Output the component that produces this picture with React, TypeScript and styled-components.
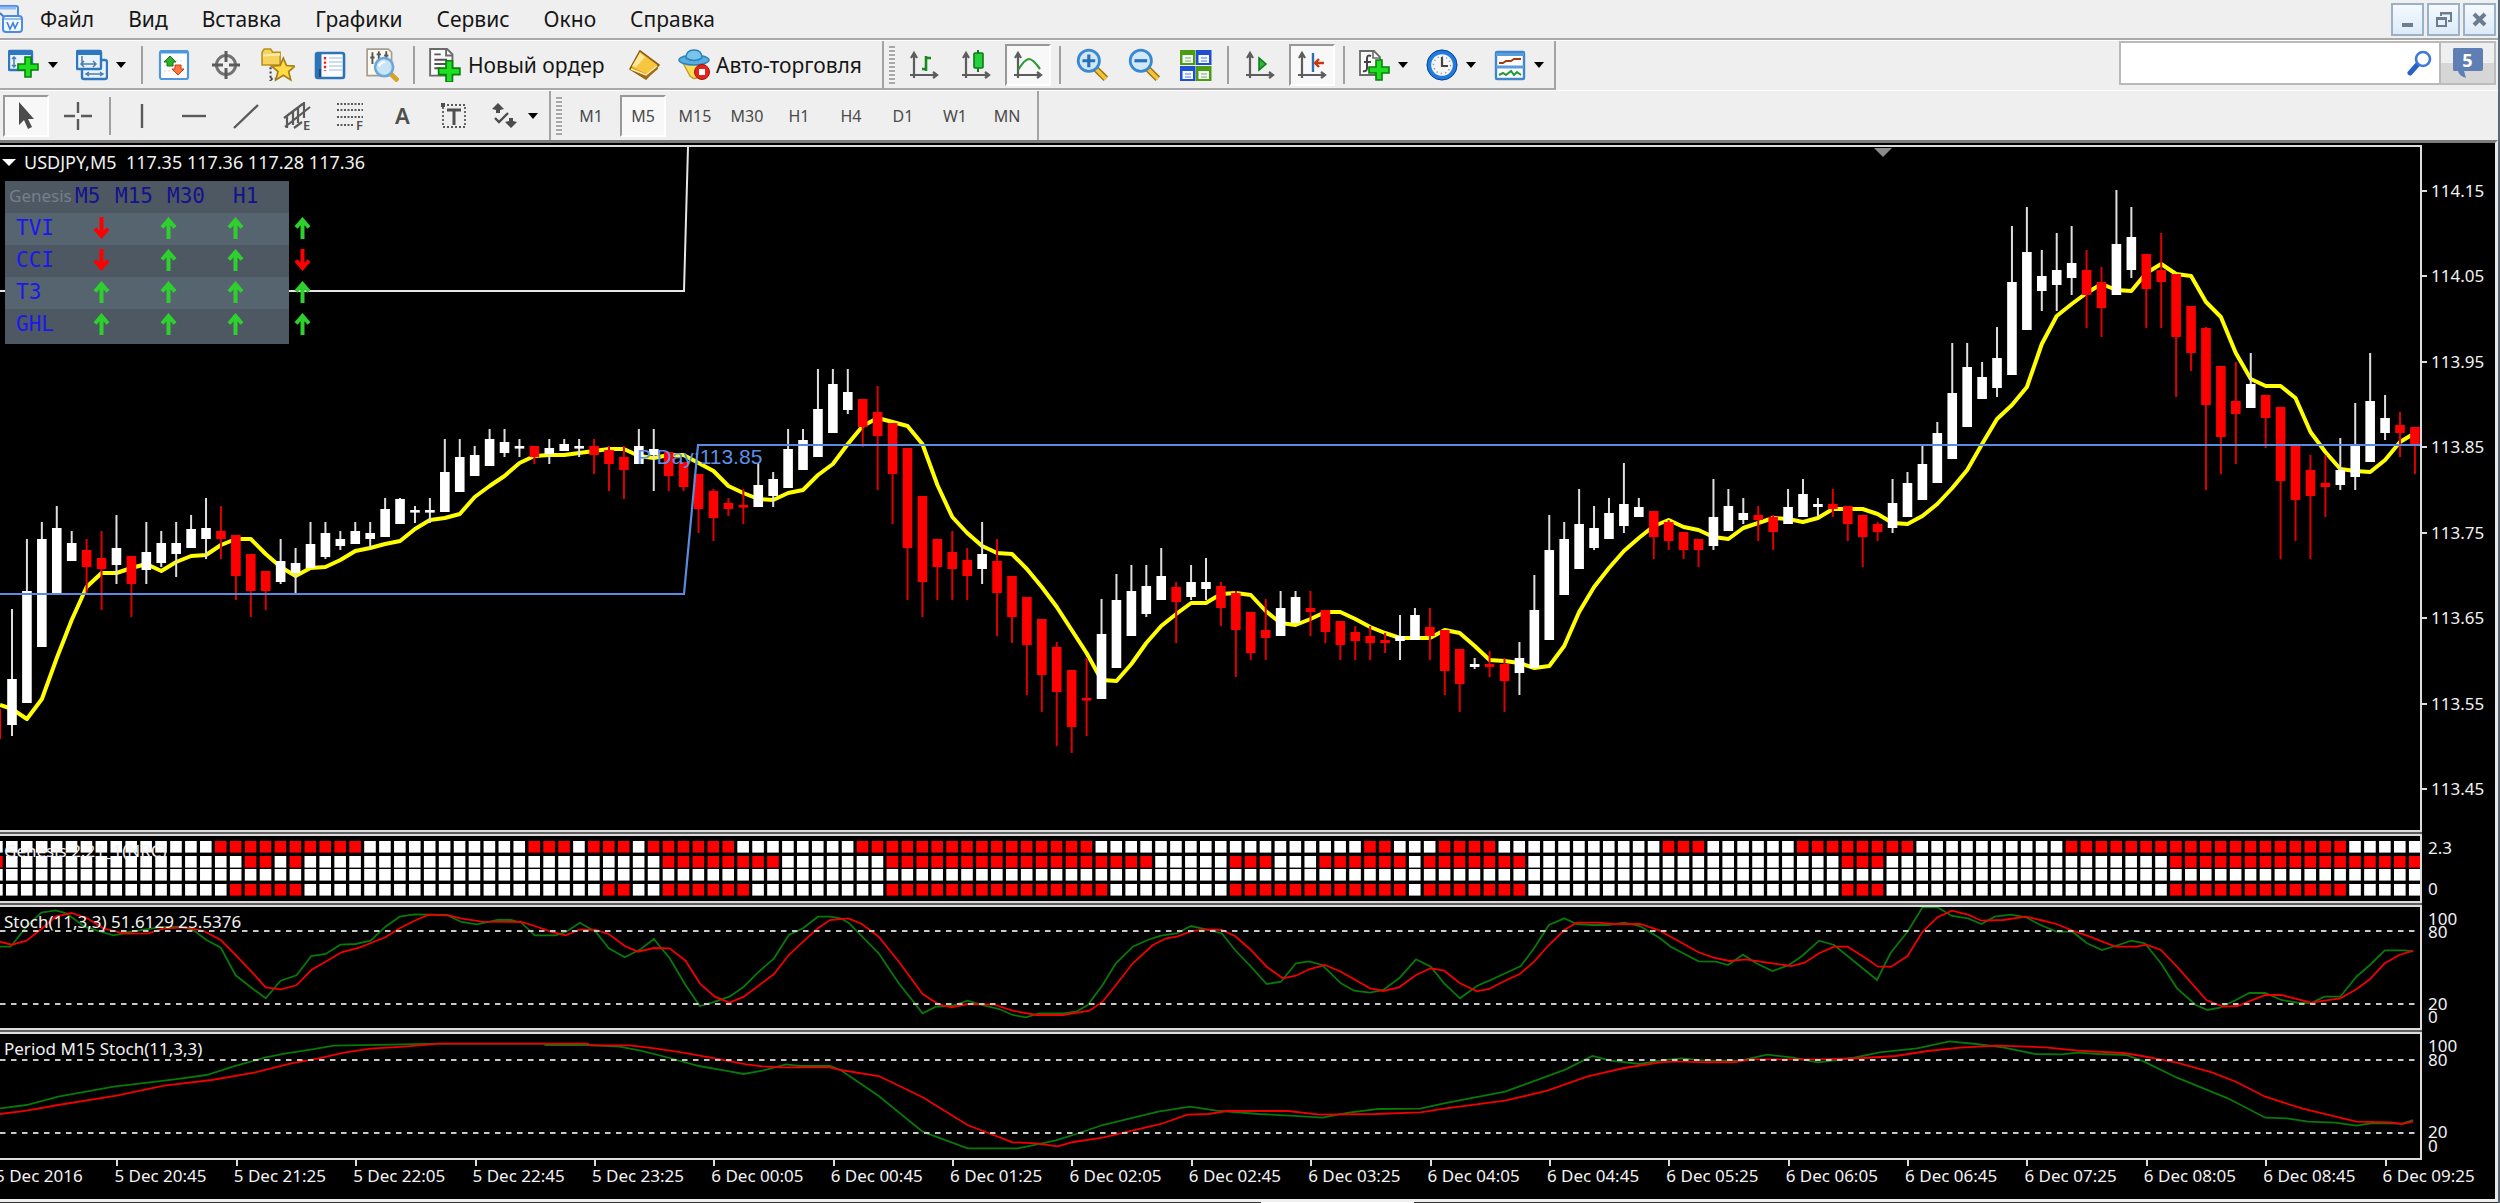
import React from "react";
import styled, { createGlobalStyle, css } from "styled-components";

const UI = `"Noto Sans", "Open Sans", "DejaVu Sans", sans-serif`;
const MONO = `"DejaVu Sans Mono", "Liberation Mono", monospace`;

const GlobalStyle = createGlobalStyle`
  * { box-sizing: border-box; }
  body { margin: 0; background: #efefef; font-family: ${UI}; }
  button, input { font: inherit; color: inherit; }
`;

/* ---------- window shell ---------- */

const Shell = styled.div`
  min-height: 100vh;
  display: flex;
  flex-direction: column;
  background: #efefef;
  border-right: 2px solid #59677c;
  overflow: hidden;
`;

const MenuRow = styled.header`
  display: flex;
  align-items: center;
  height: 40px;
  border-bottom: 2px solid #a9a9a9;
`;

const MenuNav = styled.nav`
  display: flex;
  flex: 1;
`;

const MenuButton = styled.button`
  border: 0;
  background: none;
  padding: 0 17px;
  font-size: 21px;
  line-height: 36px;
  color: #161616;
`;

const WindowButtons = styled.div`
  display: flex;
  gap: 3px;
  padding-right: 2px;
`;

const WindowButton = styled.button`
  width: 33px;
  height: 33px;
  padding: 0;
  display: grid;
  place-items: center;
  border: 2px solid #9db1c6;
  background: linear-gradient(#f4f9fd, #dcebf9);
`;

const ToolRow = styled.div`
  display: flex;
  align-items: stretch;
  height: 50px;
  border-top: 1px solid #ffffff;
`;

const ToolGroup = styled.div`
  display: flex;
  align-items: center;
  border-right: 2px solid #a4a4a4;
  border-bottom: 2px solid #a9a9a9;
`;

const SecondGroup = styled(ToolGroup)<{ $end?: number }>`
  border-bottom: 0;
  padding-right: ${(p) => p.$end ?? 0}px;
`;

const Grip = styled.span`
  width: 6px;
  height: 38px;
  margin: 0 3px 0 5px;
  background: repeating-linear-gradient(#a8a8a8 0 2px, #f4f4f4 2px 4px);
`;

const Divider = styled.span`
  width: 2px;
  height: 38px;
  margin: 0 5px;
  background: #a0a0a0;
`;

const ToolButton = styled.button<{ $on?: boolean }>`
  flex: none;
  width: 46px;
  height: 42px;
  margin: 0 3px;
  padding: 0;
  display: grid;
  place-items: center;
  border: 0;
  background: none;
  font-size: 16px;
  color: #4a4a4a;
  ${(p) =>
    p.$on &&
    css`
      background: #f8f8f8;
      border: 2px solid #ffffff;
      border-top-color: #989898;
      border-left-color: #989898;
    `}
`;

const DropButton = styled.button`
  flex: none;
  width: 68px;
  height: 42px;
  padding: 0 0 0 8px;
  display: flex;
  align-items: center;
  gap: 8px;
  border: 0;
  background: none;
  &::after {
    content: "";
    border: 5px solid transparent;
    border-top: 6px solid #000;
    border-bottom: 0;
  }
`;

const WideButton = styled.button<{ $w: number }>`
  flex: none;
  min-width: ${(p) => p.$w}px;
  height: 42px;
  padding: 0 8px;
  display: flex;
  align-items: center;
  gap: 6px;
  border: 0;
  background: none;
  font-size: 21px;
  white-space: nowrap;
  color: #161616;
`;

const Spacer = styled.div`
  flex: 1;
`;

const SearchBox = styled.label`
  flex: none;
  display: flex;
  align-items: center;
  width: 322px;
  height: 44px;
  padding-right: 6px;
  background: #fff;
  border: 2px solid #b9b9b9;
`;

const SearchInput = styled.input`
  flex: 1;
  min-width: 0;
  border: 0;
  outline: 0;
  background: none;
  padding: 0 8px;
  font-size: 21px;
`;

const NewsButton = styled.button`
  flex: none;
  width: 55px;
  height: 44px;
  margin-right: 2px;
  padding: 0;
  display: grid;
  place-items: center;
  border: 2px solid #bcbcbc;
  border-left: 0;
  background: linear-gradient(#efefef 50%, #d6d6d6 50%);
`;

const Stack = styled.span`
  display: grid;
  place-items: center;
  & > * {
    grid-area: 1 / 1;
  }
`;

const NewsCount = styled.span`
  font-size: 18px;
  font-weight: 700;
  line-height: 20px;
  padding-bottom: 6px;
  color: #fff;
`;

/* ---------- chart window ---------- */

const ChartWindow = styled.main`
  flex: 1;
  display: flex;
  flex-direction: column;
  padding-top: 2px;
  background: #000;
  border-top: 3px solid #7c7c7c;
  border-right: 3px solid #e9e9e9;
  border-bottom: 3px solid #efefef;
  font-size: 17px;
  color: #f2f2f2;
  overflow: hidden;
`;

const Pane = styled.section<{ $h: number; $grow?: boolean }>`
  display: grid;
  grid-template-columns: minmax(0, 1fr) 73px;
  flex: ${(p) => (p.$grow ? 1 : 0)} 0 ${(p) => p.$h}px;
`;

const Plot = styled.div`
  display: grid;
  grid-template: minmax(0, 1fr) / minmax(0, 1fr);
  border-top: 2px solid #dcdcdc;
  border-bottom: 2px solid #dcdcdc;
  border-right: 2px solid #dcdcdc;
  min-height: 0;
  & > * {
    grid-area: 1 / 1;
  }
`;

const Splitter = styled.div`
  flex: none;
  height: 2px;
  margin-right: 73px;
  background: #5f5f5f;
`;

const Canvas = styled.svg`
  display: block;
  width: 100%;
  height: 100%;
  min-height: 0;
`;

const PlotTitle = styled.div`
  z-index: 1;
  align-self: start;
  justify-self: start;
  padding-left: 4px;
  line-height: 30px;
  white-space: pre;
`;

const SymbolTitle = styled(PlotTitle)`
  display: flex;
  align-items: center;
  gap: 8px;
  padding-left: 2px;
  font-size: 18px;
  &::before {
    content: "";
    border: 7px solid transparent;
    border-top: 7px solid #fff;
    border-bottom: 0;
  }
`;

const PriceAxis = styled.div`
  display: flex;
  flex-direction: column;
  justify-content: space-between;
  padding: 34px 0 31px;
  line-height: 24px;
`;

const PriceLabel = styled.span`
  display: flex;
  align-items: center;
  gap: 4px;
  &::before {
    content: "";
    width: 5px;
    height: 2px;
    background: #dcdcdc;
  }
`;

const LevelAxis = styled.div<{ $line: number }>`
  display: flex;
  flex-direction: column;
  justify-content: space-between;
  padding: 7px 0 7px 6px;
  line-height: ${(p) => p.$line}px;
`;

const LevelGroup = styled.div`
  display: flex;
  flex-direction: column;
`;

const TimeAxis = styled.div`
  flex: none;
  display: grid;
  grid-template-columns: repeat(21, minmax(0, 1fr));
  height: 39px;
  margin: 0 -7px 0 -5px;
`;

const TimeLabel = styled.span`
  white-space: nowrap;
  line-height: 20px;
  &::before {
    content: "";
    display: block;
    width: 2px;
    height: 6px;
    margin-left: 2px;
    background: #dcdcdc;
  }
`;

const StatusStrip = styled.div`
  flex: none;
  height: 2px;
  background: linear-gradient(90deg, #333 1261px, #fff 1261px 1414px, #333 1414px);
`;

/* ---------- signal table ---------- */

const SignalTable = styled.table`
  z-index: 1;
  display: block;
  align-self: start;
  justify-self: start;
  margin: 34px 0 0 5px;
  font-family: ${MONO};
  font-size: 21px;
  line-height: 30px;
  text-align: left;
  white-space: nowrap;
  & th {
    font-weight: 400;
    padding: 0;
  }
  & td {
    padding: 0;
  }
  & thead, & tbody {
    display: block;
  }
`;

const SignalHead = styled.tr`
  display: grid;
  grid-template-columns: 70px 40px 52px 66px 56px;
  width: 284px;
  height: 32px;
  background: #4d5862;
  color: #14128e;
`;

const PanelName = styled.th`
  font-family: ${UI};
  font-size: 17px;
  color: #74808b;
  && {
    padding-left: 4px;
  }
`;

const SignalRow = styled.tr<{ $alt?: boolean }>`
  display: grid;
  grid-template-columns: 63px repeat(4, 67px);
  width: 284px;
  height: 32px;
  background: ${(p) => (p.$alt ? "#4d5862" : "#56646f")};
  &:last-child {
    height: 35px;
  }
`;

const SignalName = styled.th`
  color: #1a18ec;
  && {
    padding-left: 11px;
  }
`;

const SignalCell = styled.td`
  display: flex;
  height: 30px;
  align-items: center;
  justify-content: center;
`;

/* ---------- icons ---------- */

type IconProps = { children: React.ReactNode; size?: number };
const Icon = ({ children, size = 32 }: IconProps) => (
  <svg width={size} height={size} viewBox="0 0 32 32" fill="none" aria-hidden="true">
    {children}
  </svg>
);

const Plus = ({ x, y }: { x: number; y: number }) => (
  <path
    transform={`translate(${x} ${y})`}
    d="M7 0h6v7h7v6h-7v7H7v-7H0V7h7z"
    fill="#1fe01f"
    stroke="#08800d"
    strokeWidth="1.6"
  />
);

const Axes = () => (
  <path d="M6 29V6M2 26h26M3 9l3-5 3 5M25 23l4 3-4 3" stroke="#5c5c5c" strokeWidth="2.2" />
);

const AppIcon = () => (
  <svg width="23" height="28" viewBox="0 0 23 28" fill="none" aria-hidden="true">
    <path d="M-4 1h20q2 0 2 2v8" stroke="#4b8be6" strokeWidth="2" />
    <path d="M-2 3h18" stroke="#8fbcf5" strokeWidth="3" />
    <path d="M0 8l4 4" stroke="#3d7ee0" strokeWidth="2" />
    <rect x="3" y="11" width="19" height="16" rx="3" fill="#f4f9ff" stroke="#4b8be6" strokeWidth="2" />
    <path d="M4 14h17" stroke="#8fbcf5" strokeWidth="2" />
    <path d="M7 17l3 7 3-6 2 5 3-6" stroke="#3d7ee0" strokeWidth="1.6" />
  </svg>
);

const NewChart = () => (
  <Icon>
    <rect x="1" y="2" width="23" height="19" rx="1" fill="#e9f3fc" stroke="#2f78bf" strokeWidth="2.4" />
    <path d="M1 4h23" stroke="#2f78bf" strokeWidth="4" />
    <path d="M6 8v10M4 10l2-2 2 2M4 16l2 2 2-2M10 16h4" stroke="#4d7eaa" strokeWidth="1.5" />
    <Plus x={10} y={8} />
  </Icon>
);

const Profiles = () => (
  <Icon>
    <rect x="6" y="11" width="25" height="19" rx="2" fill="#e9f3fc" stroke="#2f78bf" strokeWidth="2.4" />
    <path d="M10 25h17M13 23l-3 2 3 2M24 23l3 2-3 2" stroke="#4d7eaa" strokeWidth="1.5" />
    <rect x="1" y="2" width="24" height="18" rx="1" fill="#e9f3fc" stroke="#2f78bf" strokeWidth="2.4" />
    <path d="M1 4h24" stroke="#2f78bf" strokeWidth="4" />
    <path d="M6 7v9M5 15h15M17 12l3 3-3 3M8 12l-3 3 3 3" stroke="#4d7eaa" strokeWidth="1.5" />
  </Icon>
);

const MarketWatch = () => (
  <Icon>
    <rect x="2" y="2" width="28" height="28" rx="2" fill="#fff" stroke="#4f97dd" strokeWidth="2.2" />
    <path d="M2 3h28" stroke="#4f97dd" strokeWidth="3" />
    <path d="M6 12h20M6 17h20M6 22h20" stroke="#d9d9d9" strokeWidth="1" strokeDasharray="2 2" />
    <path d="M12 7l6 6h-3v4H9v-4H6z" fill="#2fae2b" stroke="#117a14" />
    <path d="M20 26l-6-6h3v-4h6v4h3z" fill="#ff7541" stroke="#c93d13" />
  </Icon>
);

const Crosshair = () => (
  <Icon>
    <circle cx="16" cy="16" r="9.5" stroke="#727272" strokeWidth="3" />
    <path d="M16 2v11M16 19v11M2 16h11M19 16h11" stroke="#5c5c5c" strokeWidth="3" />
  </Icon>
);

const star = "M0-10l3 7 8 .6-6 5 2 8-7-4.400-7 4.400 2-8-6-5 8-.6z";

const Navigator = () => (
  <Icon size={34}>
    <path d="M1 4l2-3h6l2 3h7v12H1z" fill="#f6d35c" stroke="#b8901d" strokeWidth="1.5" />
    <path d="M2 7l16-1" stroke="#fff0a8" strokeWidth="2" />
    <path d="M9 18v13M9 29h8" stroke="#444" strokeWidth="2" strokeDasharray="2 2" />
    <path d={star} transform="translate(21 19.500)" fill="#ffdb45" stroke="#a77f17" strokeWidth="1.6" />
  </Icon>
);

const DataWindow = () => (
  <Icon>
    <rect x="2" y="4" width="28" height="25" rx="2" fill="#fff" stroke="#2c73b8" strokeWidth="2.6" />
    <path d="M5 4v25" stroke="#2c73b8" strokeWidth="5" />
    <path d="M6 20v8" stroke="#20476e" strokeWidth="2" />
    <path d="M15 9h13M15 13h13M15 17h13M15 21h13" stroke="#b9d3ee" strokeWidth="1.5" />
    <path d="M11 8v14" stroke="#e22" strokeWidth="2.4" strokeDasharray="2.400 2" />
  </Icon>
);

const Tester = () => (
  <Icon size={34}>
    <path d="M2 1h20l3 3v22H2z" fill="#fbf8f0" stroke="#a59d8f" strokeWidth="1.6" />
    <path d="M7 4v11M5 9h4M13 3v8M11 6h4M20 3v9M18 7h4" stroke="#555" strokeWidth="1.8" />
    <path d="M24 24l7 7" stroke="#d9a326" strokeWidth="4.500" />
    <circle cx="18" cy="18" r="8.500" fill="#bfe0f8" fillOpacity=".85" stroke="#6ca7dc" strokeWidth="2.4" />
    <path d="M13 17q2-4 6-4" stroke="#fff" strokeWidth="2" />
  </Icon>
);

const NewOrder = () => (
  <Icon size={34}>
    <path d="M2 1h16l5 5v20H2z" fill="#fafafa" stroke="#6b6b6b" strokeWidth="1.8" />
    <path d="M17 1v6h6" stroke="#6b6b6b" strokeWidth="1.8" />
    <path d="M6 6h6M6 11h12M6 15h12M6 19h6" stroke="#555" strokeWidth="1.8" />
    <Plus x={10} y={12} />
  </Icon>
);

const MetaEditor = () => (
  <Icon>
    <path d="M12 2L31 16l-13 14L2 20z" fill="#d99a18" stroke="#8a5c0c" strokeWidth="1.6" />
    <path d="M12 3l17 13-10 9L4 18z" fill="#f6c63f" />
    <path d="M12 4l5 4-9 10-4-1z" fill="#fde79a" />
    <path d="M2 20l16 6 12-10v4L18 30z" fill="#a56a10" />
    <path d="M3 20l15 6 11-9" stroke="#fff1b5" strokeWidth="1.400" />
  </Icon>
);

const AutoTrading = () => (
  <Icon>
    <path d="M4 12h24l-7 15q-4 5-9 0z" fill="#fbdc55" stroke="#c49b25" strokeWidth="1.4" />
    <ellipse cx="16" cy="11" rx="15" ry="5" fill="#58aee0" stroke="#2b82ba" strokeWidth="1.5" />
    <path d="M8 9q0-8 8-8t8 8q-8 5-16 0z" fill="#79c4ec" stroke="#2b82ba" strokeWidth="1.5" />
    <circle cx="24" cy="23" r="7.500" fill="#e3261b" stroke="#a4120b" />
    <rect x="21" y="20" width="6" height="6" fill="#fff" />
  </Icon>
);

const BarChartIcon = () => (
  <Icon>
    <Axes />
    <path d="M18 7v15M18 9h5M14 20h4" stroke="#178a20" strokeWidth="2.600" />
  </Icon>
);

const CandleIcon = () => (
  <Icon>
    <Axes />
    <path d="M18 1v22" stroke="#0d7a18" strokeWidth="2" />
    <rect x="14" y="4" width="9" height="15" rx="1" fill="#27cf3c" stroke="#0d7a18" strokeWidth="1.600" />
  </Icon>
);

const LineIcon = () => (
  <Icon>
    <Axes />
    <path d="M6 21q7-11 11-11t11 10" stroke="#2a9a34" strokeWidth="2.200" />
  </Icon>
);

const Zoom = ({ plus }: { plus?: boolean }) => (
  <Icon size={34}>
    <path d="M20 20l9 9" stroke="#9a6c0d" strokeWidth="6" />
    <path d="M20 20l9 9" stroke="#f2c437" strokeWidth="3.600" />
    <circle cx="13" cy="12" r="10" fill="#cfe9fb" stroke="#3a89d0" strokeWidth="2.600" />
    <path d={plus ? "M7 12h12M13 6v12" : "M7 12h12"} stroke="#2d70b2" strokeWidth="3" />
  </Icon>
);

const Tile = () => (
  <Icon>
    {[
      [0, 1, "#4a9c12"],
      [16, 1, "#1f4fd0"],
      [0, 17, "#1f4fd0"],
      [16, 17, "#4a9c12"],
    ].map(([x, y, c]) => (
      <g key={`${x}-${y}`} transform={`translate(${x} ${y})`}>
        <rect width="15.500" height="15" fill={String(c)} />
        <rect x="2.500" y="5" width="10.500" height="8" fill="#f4f8ff" />
        <path d="M5 8h6M5 11h6" stroke={String(c)} strokeOpacity=".5" strokeWidth="1.4" />
      </g>
    ))}
  </Icon>
);

const AutoScroll = () => (
  <Icon>
    <Axes />
    <path d="M15 9v12l7-6z" fill="#27b83a" stroke="#0d7a18" strokeWidth="1.500" />
  </Icon>
);

const ShiftIcon = () => (
  <Icon>
    <Axes />
    <path d="M17 4v19" stroke="#2d70b2" strokeWidth="2.400" />
    <path d="M19 14h9M23 10l-4 4 4 4" stroke="#c8380f" strokeWidth="2.400" />
  </Icon>
);

const Indicators = () => (
  <Icon>
    <path d="M2 2h14l6 6v18H2z" fill="#fafafa" stroke="#6b6b6b" strokeWidth="1.8" />
    <path d="M15 2v7h7" stroke="#6b6b6b" strokeWidth="1.6" />
    <path d="M13 7q-4-2-4 3v9q0 4-4 3M6 13h7" stroke="#444" strokeWidth="2" />
    <Plus x={11} y={11} />
  </Icon>
);

const Clock = () => (
  <Icon>
    <circle cx="16" cy="16" r="13" fill="#f6f6f6" stroke="#1f7be0" strokeWidth="4.400" />
    <circle cx="16" cy="16" r="15" stroke="#0c458f" strokeWidth="1" />
    <path d="M16 8v9h6" stroke="#444" strokeWidth="2.200" />
    <circle cx="16" cy="16" r="8.500" stroke="#9a9a9a" strokeWidth="1.400" strokeDasharray="1.400 3" />
  </Icon>
);

const Template = () => (
  <Icon>
    <rect x="2" y="3" width="28" height="27" rx="1" fill="#fff" stroke="#3f86cb" strokeWidth="2.400" />
    <path d="M2 5.500h28M2 18h28" stroke="#5b9ddb" strokeWidth="3" />
    <path d="M5 14h4l3-2h5l3-2h7" stroke="#a33b12" strokeWidth="2" />
    <path d="M5 26l4-2 3 2 5-4 3 4 3-3 4 3" stroke="#239a37" strokeWidth="2" />
  </Icon>
);

const Draw = ({ d }: { d: string }) => (
  <Icon>
    <path d={d} stroke="#5a5a5a" strokeWidth="2.400" />
  </Icon>
);

const Pointer = () => (
  <Icon>
    <path d="M9 2v23l5-5 4 9 4-2-4-8h6z" fill="#4c4c4c" />
  </Icon>
);

const glyph = { fontFamily: UI, fontWeight: 600, fill: "#4f4f4f" };

const Channel = () => (
  <Icon>
    <path d="M2 18L22 3M3 27L28 7M5 15v13M11 11v14M16 7v16M22 2v16M12 28l8-6" stroke="#5a5a5a" strokeWidth="2.200" />
    <text x="21" y="30" fontSize="13" {...glyph}>E</text>
  </Icon>
);

const Fibo = () => (
  <Icon>
    <path d="M3 4h26M3 10h26M3 17h26M3 25h16" stroke="#5a5a5a" strokeWidth="2" strokeDasharray="2 1.500" />
    <text x="22" y="30" fontSize="13" {...glyph}>F</text>
  </Icon>
);

const LetterA = () => (
  <Icon>
    <text x="9" y="24" fontSize="22" {...glyph}>A</text>
  </Icon>
);

const TextLabel = () => (
  <Icon>
    <rect x="5" y="5" width="22" height="22" stroke="#5a5a5a" strokeWidth="1.800" strokeDasharray="2 2" />
    <path d="M3 3h4v4H3z" fill="#4f4f4f" />
    <path d="M9 10h14M16 10v15" stroke="#4f4f4f" strokeWidth="3" />
  </Icon>
);

const Shapes = () => (
  <Icon>
    <path d="M10 3l6 6-4 1v3H8v-3l-4-1zM23 28l6-6-4-1v-3h-4v3l-4 1z" fill="#4c4c4c" />
    <path d="M7 18l4 4 9-9" stroke="#4c4c4c" strokeWidth="2.400" />
  </Icon>
);

const Arrow = ({ up }: { up: boolean }) => (
  <svg width="17" height="22" viewBox="0 0 17 22" fill="none" role="img" aria-label={up ? "up" : "down"}>
    <path
      d={up ? "M8.500 22V2M2 10.500L8.500 3 15 10.500" : "M8.500 0v20M2 11.500L8.500 19 15 11.500"}
      stroke={up ? "#2ed02e" : "#ff0000"}
      strokeWidth="4"
    />
  </svg>
);

/* ---------- chart data ---------- */

const STEP = 14.925;
const barX = (i: number) => 12 + i * STEP;

// Each bar: direction, high, body top, body bottom, low.
const BARS = `
w609,679,725,736 w539,591,703,703 w522,539,647,647 w506,528,593,593 w531,543,561,561 r539,550,567,593
r531,558,569,610 w515,548,565,584 r556,556,584,617 w522,552,570,584 w531,543,563,567 w522,543,554,577
w515,529,548,548 w498,528,539,559 r506,531,539,559 r535,535,576,600 r554,554,591,617 r571,571,591,610
w539,561,582,584 w548,563,573,593 w522,544,568,568 w522,533,557,559 w531,539,546,550 w522,531,544,544
w522,533,539,548 w498,509,537,537 w498,499,524,524 w506,510,512,523 w498,510,512,523 w439,472,512,512
w439,457,492,492 w446,455,476,476 w429,439,466,466 w429,442,453,457 w439,446,448,457 r446,446,457,464
w439,448,454,464 w439,444,451,451 w439,446,448,457 r439,446,455,474 r446,450,464,491 r446,457,470,499
w429,446,464,464 w429,449,455,491 r452,452,476,491 r462,462,487,491 r474,474,509,533 r489,491,518,541
r498,503,509,516 r489,505,507,524 w463,485,507,507 w472,479,496,507 w429,449,488,488 w429,440,470,470
w369,409,457,457 w369,384,433,433 w369,392,410,414 r399,399,427,447 r386,412,436,490 r423,423,474,524
r448,448,548,600 r496,496,582,617 r539,539,567,600 r531,552,569,600 r548,560,576,600 w522,554,569,584
r539,561,593,636 r576,576,617,643 r597,597,645,695 r619,619,675,712 r642,647,692,746 r670,670,727,753
r658,698,700,736 w599,634,699,699 w574,600,668,668 w565,591,636,636 w565,586,614,617 w548,576,600,600
r582,587,602,643 w565,582,597,600 w558,582,589,600 r582,586,608,626 r591,593,630,677 r612,612,653,660
r599,630,638,660 w591,608,636,636 w591,597,623,623 r591,608,612,636 r610,610,632,643 r621,621,645,660
r626,632,641,660 r626,636,643,660 r633,640,643,653 w615,636,641,660 w608,615,640,640 r608,627,636,660
r630,630,671,695 r649,649,684,712 w658,664,667,669 r651,664,667,677 r658,664,681,712 w642,658,673,695
w575,610,668,668 w515,550,640,640 w522,539,595,595 w489,524,569,569 w506,528,548,550 w498,513,539,539
w463,504,526,533 w498,507,517,517 r511,511,537,559 r520,522,541,550 r532,532,550,559 r539,539,550,567
w479,517,546,550 w489,506,531,531 w498,513,520,524 r506,515,520,541 r515,517,532,550 w489,507,524,524
w479,494,517,517 w498,504,507,517 r489,504,509,517 r506,506,524,541 r515,515,537,567 r522,524,532,541
w479,503,528,533 w472,483,517,517 w445,464,500,500 w422,433,483,483 w343,393,459,459 w343,367,427,427
w362,377,399,399 w327,358,388,397 w226,282,375,375 w207,252,330,330 w250,276,291,311 w233,270,285,311
w226,263,278,295 r250,270,295,328 r267,282,308,337 w190,244,295,295 w207,237,270,278 r254,254,289,328
r233,270,282,328 r274,274,337,397 r306,306,353,371 r327,328,405,490 r366,366,437,474 r362,401,414,464
w353,384,408,408 r395,395,418,448 r407,407,481,559 r446,446,500,541 r455,470,496,559 r455,483,487,517
w438,470,485,490 w403,446,477,490 w353,401,462,462 w395,418,433,440 r412,425,433,457 r427,427,444,474`
  .trim()
  .split(/\s+/)
  .map((s) => ({ up: s[0] === "w", v: s.slice(1).split(",").map(Number) }));

const AVERAGE = [
  709, 719, 699, 658, 620, 587, 573, 573, 568, 564, 571, 562, 556, 555, 545, 539, 539, 554, 567, 576, 568, 567,
  560, 551, 548, 544, 541, 529, 520, 518, 514, 497, 486, 476, 463, 456, 455, 455, 453, 451, 449, 449, 456, 458,
  455, 455, 463, 471, 486, 493, 499, 500, 493, 490, 475, 464, 444, 426, 418, 422, 426, 444, 485, 517, 533, 546,
  553, 554, 569, 587, 607, 630, 653, 680, 681, 664, 643, 626, 614, 603, 603, 594, 593, 595, 611, 623, 625, 619,
  612, 612, 619, 627, 633, 638, 638, 638, 630, 633, 646, 660, 661, 663, 668, 666, 646, 612, 587, 568, 551, 538,
  526, 520, 527, 530, 537, 539, 528, 523, 518, 519, 522, 518, 509, 509, 509, 514, 523, 524, 516, 504, 488, 470,
  444, 419, 405, 387, 344, 316, 304, 293, 284, 290, 291, 273, 264, 274, 276, 302, 317, 353, 379, 386, 386, 398,
  432, 452, 469, 471, 472, 460, 442, 433,
];

// Heat-map rows: vertical position and the ranges of red cells.
const HEAT: { y: number; red: [number, number][] }[] = [
  { y: 841, red: [[14, 23], [35, 37], [39, 41], [43, 48], [57, 72], [91, 92], [96, 99], [111, 113], [120, 127], [138, 156]] },
  { y: 856, red: [[-1, -1], [16, 17], [19, 19], [44, 51], [59, 76], [82, 84], [88, 93], [95, 101], [123, 125], [145, 161]] },
  { y: 869, red: [] },
  { y: 884, red: [[15, 19], [40, 41], [44, 49], [59, 73], [82, 93], [95, 101], [123, 125], [145, 156]] },
];

// Oscillator traces come in three blocks, each with its own origin and x scale.
const BLOCKS = [
  [0, 1.889],
  [830, 1.889],
  [1660, 1.8667],
];

const trace = (...blocks: string[]) =>
  blocks
    .map((b, i) =>
      b
        .split(" ")
        .map((p) => {
          const [x, y] = p.split(",").map(Number);
          return `${(BLOCKS[i][0] + x / BLOCKS[i][1]).toFixed(1)},${(820 + y / 3).toFixed(1)}`;
        })
        .join(" ")
    )
    .join(" ");

const FAST_K = trace(
  "0,380 20,380 50,320 78,278 105,271 125,280 160,320 190,335 215,346 245,336 300,322 340,320 365,330 390,360 417,383 445,466 475,503 502,535 530,482 560,466 588,408 615,402 643,374 672,372 700,362 728,320 755,290 783,283 845,285 870,305 900,313 940,300 965,300 985,308 1010,346 1050,346 1070,335 1095,308 1125,335 1150,385 1180,412 1210,388 1235,357 1265,415 1295,495 1322,558 1345,548 1378,530 1405,500 1430,460 1462,415 1490,345 1517,325 1545,290",
  "0,290 20,295 35,308 92,400 130,490 175,580 200,560 230,558 260,542 290,556 320,567 345,585 370,592 395,580 440,580 465,575 487,555 515,495 540,430 572,380 600,360 625,347 655,340 682,318 710,328 740,340 765,390 795,440 825,492 852,485 880,430 905,424 930,435 965,490 990,512 1020,518 1045,510 1075,475 1107,418 1135,440 1160,490 1190,535 1222,498 1245,482 1305,438 1330,385 1358,315 1387,295 1410,312 1440,315 1470,315 1500,308 1530,318",
  "0,355 20,380 72,424 105,425 127,435 155,404 180,430 210,453 240,436 265,408 297,362 325,375 405,480 430,400 462,335 490,262 518,262 545,288 575,295 600,312 625,290 655,284 683,292 710,315 740,335 770,335 797,370 825,390 850,378 880,362 905,370 935,430 965,505 1000,555 1022,570 1045,563 1075,540 1100,519 1130,519 1160,540 1190,548 1215,550 1240,530 1270,530 1300,470 1325,435 1353,391 1390,391 1406,395"
);
const FAST_D = trace(
  "0,365 22,374 50,362 80,325 105,290 135,279 165,295 195,325 235,341 280,340 310,325 350,322 385,333 417,360 445,405 475,455 502,502 530,508 560,496 588,450 615,425 645,397 680,382 728,352 755,325 783,302 810,284 850,287 870,295 910,305 985,306 1010,318 1040,335 1068,346 1095,329 1125,330 1150,342 1180,378 1205,395 1235,384 1265,385 1295,422 1322,490 1350,530 1378,548 1405,530 1462,462 1490,405 1517,365 1545,325",
  "0,300 35,295 60,312 92,350 130,425 175,522 205,553 230,562 260,552 310,554 345,572 390,585 440,585 490,572 515,545 545,485 572,430 610,375 635,355 655,350 682,334 710,328 740,330 765,348 795,390 825,440 855,475 880,467 905,448 935,435 965,455 990,478 1020,505 1045,513 1075,502 1107,465 1135,445 1160,452 1190,490 1222,514 1245,507 1275,482 1303,462 1330,425 1358,375 1387,330 1410,308 1450,308 1480,312 1530,312",
  "0,332 20,350 72,397 100,413 130,423 160,418 210,430 245,438 270,428 297,400 325,380 350,380 380,410 407,440 432,440 462,408 490,335 518,292 545,272 575,284 600,302 640,300 683,290 710,300 740,312 770,332 797,347 850,380 890,380 908,374 935,390 965,440 1020,540 1050,560 1078,558 1130,525 1160,525 1215,548 1270,535 1300,508 1325,478 1353,430 1380,405 1406,392"
);
const SLOW_K = trace(
  "0,865 50,855 110,830 215,800 330,778 390,765 440,740 500,713 540,700 590,688 630,677 740,674 825,671 1030,671 1030,675 1110,675 1170,680 1210,692 1265,714 1320,738 1370,752 1405,762 1440,752 1485,733 1510,738",
  "0,738 20,750 92,828 175,935 260,985 355,985 425,962 465,942 515,915 620,875 680,860 730,872 810,882 870,887 930,893 980,878 1035,867 1115,866 1160,850 1275,815 1390,748 1440,708 1475,722 1530,732",
  "0,722 40,715 85,722 150,722 200,704 245,712 295,727 360,714 410,697 480,685 540,664 590,672 640,682 700,702 750,703 780,698 820,702 870,705 900,722 965,773 1060,835 1130,893 1170,895 1210,905 1260,908 1300,917 1330,909 1385,911 1406,900"
);
const SLOW_D = trace(
  "0,882 50,872 110,855 220,827 310,797 400,780 480,758 550,730 600,716 650,698 700,686 770,679 830,671 1110,671 1115,676 1190,676 1240,686 1290,698 1350,715 1410,733 1440,739 1480,742",
  "0,742 20,750 92,768 175,832 260,915 345,967 390,970 430,979 460,966 515,953 625,912 675,884 715,882 750,873 865,873 925,884 1030,882 1115,877 1160,866 1275,842 1355,812 1430,770 1500,744",
  "0,727 30,724 90,727 140,726 170,718 300,718 380,714 440,708 500,693 560,683 630,677 720,682 780,692 865,699 900,708 965,728 1030,757 1075,785 1130,830 1200,866 1300,905 1365,907 1385,912 1406,904"
);

const PRICES = ["114.15", "114.05", "113.95", "113.85", "113.75", "113.65", "113.55", "113.45"];

const TIMES = [
  "5 Dec 2016", "5 Dec 20:45", "5 Dec 21:25", "5 Dec 22:05", "5 Dec 22:45", "5 Dec 23:25", "6 Dec 00:05",
  "6 Dec 00:45", "6 Dec 01:25", "6 Dec 02:05", "6 Dec 02:45", "6 Dec 03:25", "6 Dec 04:05", "6 Dec 04:45",
  "6 Dec 05:25", "6 Dec 06:05", "6 Dec 06:45", "6 Dec 07:25", "6 Dec 08:05", "6 Dec 08:45", "6 Dec 09:25",
];

const SIGNALS: [string, boolean[]][] = [
  ["TVI", [false, true, true, true]],
  ["CCI", [false, true, true, false]],
  ["T3", [true, true, true, true]],
  ["GHL", [true, true, true, true]],
];

/* ---------- plots ---------- */

const PriceCanvas = () => (
  <Canvas viewBox="0 147 2420 683" preserveAspectRatio="none">
    <polyline points="0,291 684,291 688,147" fill="none" stroke="#e6e6e6" strokeWidth="2" />
    <polyline
      points={"0,705 " + AVERAGE.map((y, i) => `${barX(i).toFixed(1)},${y}`).join(" ")}
      fill="none"
      stroke="#ffff00"
      strokeWidth="4"
      strokeLinejoin="round"
    />
    <rect x="-8" y="709" width="9" height="30" fill="#f00" />
    {BARS.map(({ up, v: [high, top, bottom, low] }, i) => (
      <g key={i}>
        <rect x={barX(i) - 1} y={high} width="2" height={low - high} fill={up ? "#dedede" : "#dc0000"} />
        <rect
          x={barX(i) - 4.8}
          y={top}
          width="9.600"
          height={Math.max(bottom - top, 2.6)}
          fill={up ? "#ffffff" : "#ff0000"}
        />
      </g>
    ))}
    <polyline points="0,594 684,594 698,445 2420,445" fill="none" stroke="#5b8be0" strokeWidth="2.200" />
    <text x="637" y="464" fontSize="21" fill="#5f8fe6" fontFamily={`"Liberation Sans", Arial, sans-serif`}>
      P Day:113.85
    </text>
    <path d="M1874 148h18l-9 9z" fill="#8a8a8a" />
  </Canvas>
);

const HeatCanvas = () => (
  <Canvas viewBox="0 836 2420 65" preserveAspectRatio="none">
    {HEAT.map(({ y, red }) =>
      Array.from({ length: 163 }, (_, n) => n - 1).map((i) => (
        <rect
          key={`${y}-${i}`}
          x={6 + i * STEP}
          y={y}
          width="11.600"
          height="11.600"
          fill={red.some(([a, b]) => i >= a && i <= b) ? "#ff0000" : "#ffffff"}
        />
      ))
    )}
  </Canvas>
);

type OscProps = { top: number; height: number; levels: number[]; k: string; d: string };
const Oscillator = ({ top, height, levels, k, d }: OscProps) => (
  <Canvas viewBox={`0 ${top} 2420 ${height}`} preserveAspectRatio="none">
    <polyline points={k} fill="none" stroke="#087808" strokeWidth="1.800" />
    <polyline points={d} fill="none" stroke="#f00000" strokeWidth="1.800" />
    {levels.map((y) => (
      <path key={y} d={`M0 ${y}H2420`} stroke="#c9c9c9" strokeWidth="2" strokeDasharray="5.500 5.500" />
    ))}
  </Canvas>
);

/* ---------- page ---------- */

const MENU = ["Файл", "Вид", "Вставка", "Графики", "Сервис", "Окно", "Справка"];
const FRAMES = ["M1", "M5", "M15", "M30", "H1", "H4", "D1", "W1", "MN"];

type Tool = { name: string; icon: React.ReactNode; on?: boolean };
const Tools = ({ items }: { items: Tool[] }) => (
  <>
    {items.map((t) => (
      <ToolButton key={t.name} aria-label={t.name} $on={t.on}>
        {t.icon}
      </ToolButton>
    ))}
  </>
);

const App = () => (
  <>
    <GlobalStyle />
    <Shell>
      <MenuRow>
        <AppIcon />
        <MenuNav>
          {MENU.map((m) => (
            <MenuButton key={m}>{m}</MenuButton>
          ))}
        </MenuNav>
        <WindowButtons>
          <WindowButton aria-label="Свернуть">
            <svg width="17" height="17" viewBox="0 0 17 17" aria-hidden="true">
              <path d="M3 14h11" stroke="#6d7d8e" strokeWidth="4" />
            </svg>
          </WindowButton>
          <WindowButton aria-label="Восстановить">
            <svg width="17" height="17" viewBox="0 0 17 17" fill="none" stroke="#6d7d8e" strokeWidth="2" aria-hidden="true">
              <path d="M6 5V2h10v8h-3M5 2.500h11" />
              <path d="M2 7h9v8H2zM2 8h9" />
            </svg>
          </WindowButton>
          <WindowButton aria-label="Закрыть">
            <svg width="17" height="17" viewBox="0 0 17 17" aria-hidden="true">
              <path d="M3 3l11 11M14 3L3 14" stroke="#6d7d8e" strokeWidth="4" />
            </svg>
          </WindowButton>
        </WindowButtons>
      </MenuRow>

      <ToolRow>
        <ToolGroup>
          <DropButton aria-label="Новый график"><NewChart /></DropButton>
          <DropButton aria-label="Профили"><Profiles /></DropButton>
          <Divider />
          <Tools
            items={[
              { name: "Обзор рынка", icon: <MarketWatch /> },
              { name: "Окно данных", icon: <Crosshair /> },
              { name: "Навигатор", icon: <Navigator /> },
              { name: "Терминал", icon: <DataWindow /> },
              { name: "Тестер стратегий", icon: <Tester /> },
            ]}
          />
          <Divider />
          <WideButton $w={198}><NewOrder />Новый ордер</WideButton>
          <ToolButton aria-label="MetaEditor"><MetaEditor /></ToolButton>
          <WideButton $w={212}><AutoTrading />Авто-торговля</WideButton>
        </ToolGroup>
        <ToolGroup>
          <Grip />
          <Tools
            items={[
              { name: "Бары", icon: <BarChartIcon /> },
              { name: "Японские свечи", icon: <CandleIcon /> },
              { name: "Линия", icon: <LineIcon />, on: true },
            ]}
          />
          <Divider />
          <Tools
            items={[
              { name: "Приблизить", icon: <Zoom plus /> },
              { name: "Отдалить", icon: <Zoom /> },
              { name: "Расположить окна", icon: <Tile /> },
            ]}
          />
          <Divider />
          <Tools
            items={[
              { name: "Автопрокрутка", icon: <AutoScroll /> },
              { name: "Сдвиг графика", icon: <ShiftIcon />, on: true },
            ]}
          />
          <Divider />
          <DropButton aria-label="Индикаторы"><Indicators /></DropButton>
          <DropButton aria-label="Периоды"><Clock /></DropButton>
          <DropButton aria-label="Шаблоны"><Template /></DropButton>
        </ToolGroup>
        <Spacer />
        <SearchBox>
          <SearchInput type="search" aria-label="Поиск" />
          <svg width="26" height="26" viewBox="0 0 26 26" fill="none" aria-hidden="true">
            <path d="M3 23l8-9" stroke="#2a62c4" strokeWidth="5" strokeLinecap="round" />
            <circle cx="16" cy="9" r="7" fill="#fff" stroke="#3f78da" strokeWidth="2.600" />
          </svg>
        </SearchBox>
        <NewsButton aria-label="Сообщения">
          <Stack>
            <svg width="32" height="30" viewBox="0 0 32 30" aria-hidden="true">
              <path d="M2 0h27q2 0 2 2v19q0 2-2 2H12l2 7q-7-2-8-7H2q-1 0-1-2V2q0-2 1-2z" fill="#5f7fb4" />
            </svg>
            <NewsCount>5</NewsCount>
          </Stack>
        </NewsButton>
      </ToolRow>

      <ToolRow>
        <SecondGroup $end={1}>
          <Tools
            items={[
              { name: "Курсор", icon: <Pointer />, on: true },
              { name: "Перекрестие", icon: <Draw d="M16 2v11M16 19v11M2 16h11M19 16h11" /> },
            ]}
          />
          <Divider />
          <Tools
            items={[
              { name: "Вертикальная линия", icon: <Draw d="M16 4v24" /> },
              { name: "Горизонтальная линия", icon: <Draw d="M4 16h24" /> },
              { name: "Трендовая линия", icon: <Draw d="M4 28L28 5" /> },
              { name: "Канал", icon: <Channel /> },
              { name: "Линии Фибоначчи", icon: <Fibo /> },
              { name: "Текст", icon: <LetterA /> },
              { name: "Текстовая метка", icon: <TextLabel /> },
            ]}
          />
          <DropButton aria-label="Стрелки"><Shapes /></DropButton>
        </SecondGroup>
        <SecondGroup $end={4}>
          <Grip />
          {FRAMES.map((f) => (
            <ToolButton key={f} $on={f === "M5"}>{f}</ToolButton>
          ))}
        </SecondGroup>
      </ToolRow>

      <ChartWindow>
        <Pane $h={680} $grow>
          <Plot>
            <PriceCanvas />
            <SymbolTitle>{"USDJPY,M5  117.35 117.36 117.28 117.36"}</SymbolTitle>
            <SignalTable>
              <thead>
                <SignalHead>
                  <PanelName>Genesis</PanelName>
                  <th>M5</th>
                  <th>M15</th>
                  <th>M30</th>
                  <th>H1</th>
                </SignalHead>
              </thead>
              <tbody>
                {SIGNALS.map(([name, ups], i) => (
                  <SignalRow key={name} $alt={i % 2 === 1}>
                    <SignalName>{name}</SignalName>
                    {ups.map((up, j) => (
                      <SignalCell key={j}><Arrow up={up} /></SignalCell>
                    ))}
                  </SignalRow>
                ))}
              </tbody>
            </SignalTable>
          </Plot>
          <PriceAxis>
            {PRICES.map((p) => (
              <PriceLabel key={p}>{p}</PriceLabel>
            ))}
          </PriceAxis>
        </Pane>
        <Splitter />
        <Pane $h={69}>
          <Plot>
            <HeatCanvas />
            <PlotTitle>Genesis 2.21_1(NRC)</PlotTitle>
          </Plot>
          <LevelAxis $line={14}>
            <span>2.3</span>
            <span>0</span>
          </LevelAxis>
        </Pane>
        <Splitter />
        <Pane $h={125}>
          <Plot>
            <Oscillator top={907} height={121} levels={[931, 1004]} k={FAST_K} d={FAST_D} />
            <PlotTitle>Stoch(11,3,3) 51.6129 25.5376</PlotTitle>
          </Plot>
          <LevelAxis $line={13}>
            <LevelGroup><span>100</span><span>80</span></LevelGroup>
            <LevelGroup><span>20</span><span>0</span></LevelGroup>
          </LevelAxis>
        </Pane>
        <Splitter />
        <Pane $h={128}>
          <Plot>
            <Oscillator top={1034} height={124} levels={[1060, 1133]} k={SLOW_K} d={SLOW_D} />
            <PlotTitle>Period M15 Stoch(11,3,3)</PlotTitle>
          </Plot>
          <LevelAxis $line={14}>
            <LevelGroup><span>100</span><span>80</span></LevelGroup>
            <LevelGroup><span>20</span><span>0</span></LevelGroup>
          </LevelAxis>
        </Pane>
        <TimeAxis>
          {TIMES.map((t) => (
            <TimeLabel key={t}>{t}</TimeLabel>
          ))}
        </TimeAxis>
      </ChartWindow>
      <StatusStrip />
    </Shell>
  </>
);

export default App;
